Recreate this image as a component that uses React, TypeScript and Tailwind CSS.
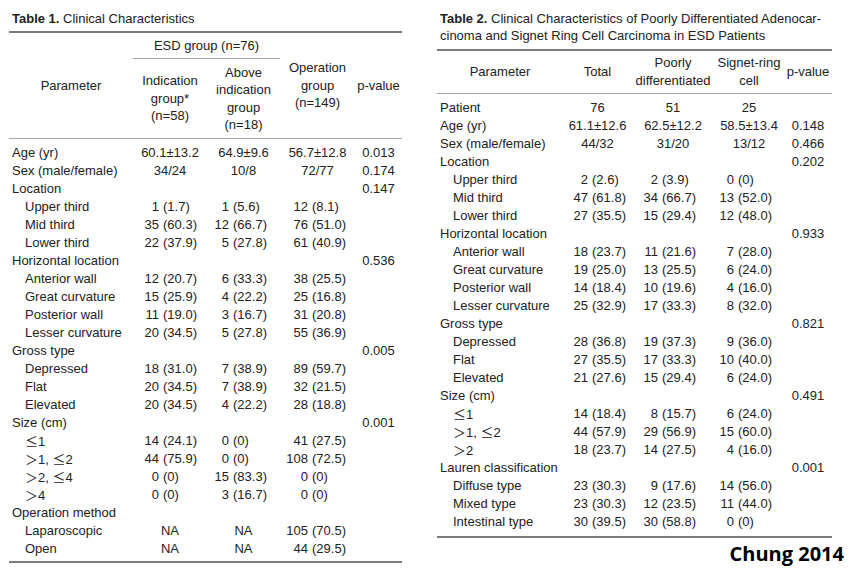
import React from 'react';

type Row = { label: React.ReactNode; sub?: boolean; vals: string[]; p?: string };

const le = <span className="font-['Noto_Sans_CJK_KR',sans-serif]">≤</span>;
const gt = <span className="font-['Noto_Sans_CJK_KR',sans-serif]">＞</span>;

const table1: Row[] = [
  { label: 'Age (yr)', vals: ['60.1±13.2', '64.9±9.6', '56.7±12.8'], p: '0.013' },
  { label: 'Sex (male/female)', vals: ['34/24', '10/8', '72/77'], p: '0.174' },
  { label: 'Location', vals: [], p: '0.147' },
  { label: 'Upper third', sub: true, vals: ['1 (1.7)', '1 (5.6)', '12 (8.1)'] },
  { label: 'Mid third', sub: true, vals: ['35 (60.3)', '12 (66.7)', '76 (51.0)'] },
  { label: 'Lower third', sub: true, vals: ['22 (37.9)', '5 (27.8)', '61 (40.9)'] },
  { label: 'Horizontal location', vals: [], p: '0.536' },
  { label: 'Anterior wall', sub: true, vals: ['12 (20.7)', '6 (33.3)', '38 (25.5)'] },
  { label: 'Great curvature', sub: true, vals: ['15 (25.9)', '4 (22.2)', '25 (16.8)'] },
  { label: 'Posterior wall', sub: true, vals: ['11 (19.0)', '3 (16.7)', '31 (20.8)'] },
  { label: 'Lesser curvature', sub: true, vals: ['20 (34.5)', '5 (27.8)', '55 (36.9)'] },
  { label: 'Gross type', vals: [], p: '0.005' },
  { label: 'Depressed', sub: true, vals: ['18 (31.0)', '7 (38.9)', '89 (59.7)'] },
  { label: 'Flat', sub: true, vals: ['20 (34.5)', '7 (38.9)', '32 (21.5)'] },
  { label: 'Elevated', sub: true, vals: ['20 (34.5)', '4 (22.2)', '28 (18.8)'] },
  { label: 'Size (cm)', vals: [], p: '0.001' },
  { label: <>{le}1</>, sub: true, vals: ['14 (24.1)', '0 (0)', '41 (27.5)'] },
  { label: <>{gt}1, {le}2</>, sub: true, vals: ['44 (75.9)', '0 (0)', '108 (72.5)'] },
  { label: <>{gt}2, {le}4</>, sub: true, vals: ['0 (0)', '15 (83.3)', '0 (0)'] },
  { label: <>{gt}4</>, sub: true, vals: ['0 (0)', '3 (16.7)', '0 (0)'] },
  { label: 'Operation method', vals: [] },
  { label: 'Laparoscopic', sub: true, vals: ['NA', 'NA', '105 (70.5)'] },
  { label: 'Open', sub: true, vals: ['NA', 'NA', '44 (29.5)'] },
];

const table2: Row[] = [
  { label: 'Patient', vals: ['76', '51', '25'] },
  { label: 'Age (yr)', vals: ['61.1±12.6', '62.5±12.2', '58.5±13.4'], p: '0.148' },
  { label: 'Sex (male/female)', vals: ['44/32', '31/20', '13/12'], p: '0.466' },
  { label: 'Location', vals: [], p: '0.202' },
  { label: 'Upper third', sub: true, vals: ['2 (2.6)', '2 (3.9)', '0 (0)'] },
  { label: 'Mid third', sub: true, vals: ['47 (61.8)', '34 (66.7)', '13 (52.0)'] },
  { label: 'Lower third', sub: true, vals: ['27 (35.5)', '15 (29.4)', '12 (48.0)'] },
  { label: 'Horizontal location', vals: [], p: '0.933' },
  { label: 'Anterior wall', sub: true, vals: ['18 (23.7)', '11 (21.6)', '7 (28.0)'] },
  { label: 'Great curvature', sub: true, vals: ['19 (25.0)', '13 (25.5)', '6 (24.0)'] },
  { label: 'Posterior wall', sub: true, vals: ['14 (18.4)', '10 (19.6)', '4 (16.0)'] },
  { label: 'Lesser curvature', sub: true, vals: ['25 (32.9)', '17 (33.3)', '8 (32.0)'] },
  { label: 'Gross type', vals: [], p: '0.821' },
  { label: 'Depressed', sub: true, vals: ['28 (36.8)', '19 (37.3)', '9 (36.0)'] },
  { label: 'Flat', sub: true, vals: ['27 (35.5)', '17 (33.3)', '10 (40.0)'] },
  { label: 'Elevated', sub: true, vals: ['21 (27.6)', '15 (29.4)', '6 (24.0)'] },
  { label: 'Size (cm)', vals: [], p: '0.491' },
  { label: <>{le}1</>, sub: true, vals: ['14 (18.4)', '8 (15.7)', '6 (24.0)'] },
  { label: <>{gt}1, {le}2</>, sub: true, vals: ['44 (57.9)', '29 (56.9)', '15 (60.0)'] },
  { label: <>{gt}2</>, sub: true, vals: ['18 (23.7)', '14 (27.5)', '4 (16.0)'] },
  { label: 'Lauren classification', vals: [], p: '0.001' },
  { label: 'Diffuse type', sub: true, vals: ['23 (30.3)', '9 (17.6)', '14 (56.0)'] },
  { label: 'Mixed type', sub: true, vals: ['23 (30.3)', '12 (23.5)', '11 (44.0)'] },
  { label: 'Intestinal type', sub: true, vals: ['30 (39.5)', '30 (58.8)', '0 (0)'] },
];

// width of the right-aligned count box in each value column
const countBox1 = ['w-[26px]', 'w-[22px]', 'w-[28px]'];
const countBox2 = ['w-[25px]', 'w-[26px]', 'w-[20px]'];

function Value({ v, box }: { v?: string; box: string }) {
  if (!v) return <div />;
  const m = v.match(/^(\d+) (\(.*\))$/);
  if (!m) return <div className="text-center">{v}</div>;
  return (
    <div className="flex whitespace-nowrap">
      <span className={`${box} text-right`}>{m[1]}</span>
      <span className="ml-[4px]">{m[2]}</span>
    </div>
  );
}

function Body({ rows, cols, boxes }: { rows: Row[]; cols: string; boxes: string[] }) {
  return (
    <>
      {rows.map((r, i) => (
        <div key={i} className={`grid ${cols} h-[18px] leading-[18px]`}>
          <div className={`whitespace-nowrap ${r.sub ? 'pl-[16px]' : 'pl-[3px]'}`}>{r.label}</div>
          <Value v={r.vals[0]} box={boxes[0]} />
          <Value v={r.vals[1]} box={boxes[1]} />
          <Value v={r.vals[2]} box={boxes[2]} />
          <div className="text-center">{r.p}</div>
        </div>
      ))}
    </>
  );
}

const cols1 = 'grid-cols-[124px_74px_73px_75px_47px]';
const cols2 = 'grid-cols-[126px_69px_82px_70px_48px]';

export default function App() {
  return (
    <div className="w-[857px] h-[570px] bg-white text-[#222] text-[13px] font-['Liberation_Sans',Arial,sans-serif] flex pl-[9px] pt-[10px]">
      {/* Table 1 */}
      <div className="w-[393px] flex flex-col">
        <div className="pl-[3px] leading-[17px]">
          <span className="font-bold">Table 1.</span> Clinical Characteristics
        </div>
        <div className="mt-[4px] h-[2px] bg-[#7c7c7c]" />
        <div className={`grid ${cols1} grid-rows-[26px_79px] leading-[17.5px] border-b border-[#a8a8a8] text-center`}>
          <div className="row-span-2 flex items-center justify-center">Parameter</div>
          <div className="col-span-2 flex items-center justify-center border-b border-[#a8a8a8]">ESD group (n=76)</div>
          <div className="row-span-2 flex items-center justify-center">
            Operation<br />group<br />(n=149)
          </div>
          <div className="row-span-2 flex items-center justify-center">p-value</div>
          <div className="flex items-center justify-center">
            Indication<br />group*<br />(n=58)
          </div>
          <div className="flex items-center justify-center">
            Above<br />indication<br />group<br />(n=18)
          </div>
        </div>
        <div className="pt-[5px] pb-[3px]">
          <Body rows={table1} cols={cols1} boxes={countBox1} />
        </div>
        <div className="h-[2px] bg-[#7c7c7c]" />
      </div>

      {/* Table 2 */}
      <div className="ml-[35px] w-[407px] flex flex-col">
        <div className="w-[395px] flex flex-col">
          <div className="pl-[3px] leading-[17px] whitespace-nowrap">
            <span className="font-bold">Table 2.</span> Clinical Characteristics of Poorly Differentiated Adenocar-
            <br />
            cinoma and Signet Ring Cell Carcinoma in ESD Patients
          </div>
          <div className="mt-[5px] h-[2px] bg-[#7c7c7c]" />
          <div className={`grid ${cols2} h-[43px] leading-[18px] border-b border-[#a8a8a8] text-center`}>
            <div className="flex items-center justify-center">Parameter</div>
            <div className="flex items-center justify-center">Total</div>
            <div className="flex items-center justify-center">
              Poorly<br />differentiated
            </div>
            <div className="flex items-center justify-center">
              Signet-ring<br />cell
            </div>
            <div className="flex items-center justify-center">p-value</div>
          </div>
          <div className="pt-[5px] pb-[5px]">
            <Body rows={table2} cols={cols2} boxes={countBox2} />
          </div>
          <div className="h-[2px] bg-[#7c7c7c]" />
        </div>
        <div className="mt-[4px] text-right text-[20px] leading-[24px] font-bold text-black font-['Open_Sans',sans-serif]">
          Chung 2014
        </div>
      </div>
    </div>
  );
}
